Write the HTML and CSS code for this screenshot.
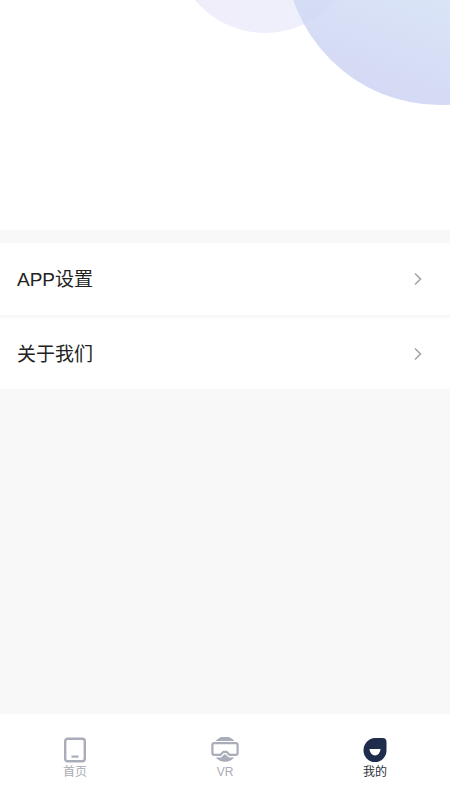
FILE: index.html
```html
<!DOCTYPE html>
<html lang="zh-CN">

<head>
    <meta charset="UTF-8">
    <meta name="viewport" content="width=device-width, initial-scale=1.0">
    <title>我的</title>
    <link rel="stylesheet" href="styles.css">
</head>

<body>
    <div class="page">
        <header class="banner">
            <div class="circle circle-small"></div>
            <div class="circle circle-large"></div>
        </header>

        <ul class="menu">
            <li class="menu-item">
                <span>APP设置</span>
                <svg class="arrow" viewBox="0 0 8 14"><path d="M1 1.5 L6.5 7 L1 12.5" /></svg>
            </li>
            <li class="menu-item">
                <span>关于我们</span>
                <svg class="arrow" viewBox="0 0 8 14"><path d="M1 1.5 L6.5 7 L1 12.5" /></svg>
            </li>
        </ul>

        <main class="blank"></main>

        <nav class="tabs">
            <div class="tab">
                <svg class="tab-icon" viewBox="0 0 24 26">
                    <rect x="2.2" y="1.7" width="19.6" height="22.6" rx="2.5" fill="none" stroke="#a9adb9" stroke-width="2.4" />
                    <rect x="8.5" y="18.5" width="7" height="2.2" fill="#a9adb9" />
                </svg>
                <span>首页</span>
            </div>
            <div class="tab">
                <svg class="tab-icon" viewBox="0 0 28 26">
                    <path d="M4.4 4 A12.5 12.5 0 0 1 23.6 4 Z" fill="#a9adb9" />
                    <path d="M4.6 20.5 A12.5 12.5 0 0 0 23.4 20.5 L18 20.5 L14 17 L10 20.5 Z" fill="#a9adb9" />
                    <path d="M1.4 8 Q1.4 6.2 3.2 6.2 L24.8 6.2 Q26.6 6.2 26.6 8 L26.6 16 Q26.6 17.8 24.8 17.8 L18.5 17.8 L15.5 14.8 L12.5 14.8 L9.5 17.8 L3.2 17.8 Q1.4 17.8 1.4 16 Z" fill="none" stroke="#a9adb9" stroke-width="2.2" />
                </svg>
                <span>VR</span>
            </div>
            <div class="tab tab-active">
                <svg class="tab-icon" viewBox="0 0 24 26">
                    <path d="M12 1 L19.5 1 Q23.5 1 23.5 5 L23.5 13.5 A11.5 11.5 0 0 1 0.5 13.5 A12 12.5 0 0 1 12 1 Z" fill="#1f2d4d" />
                    <path d="M6.5 12 L17.5 12 A5.5 6.5 0 0 1 6.5 12 Z" fill="#fff" />
                </svg>
                <span>我的</span>
            </div>
        </nav>
    </div>
</body>

</html>
```

FILE: styles.css
```css
* {
    box-sizing: border-box;
}

body {
    margin: 0;
    font-family: "Liberation Sans", "Noto Sans CJK SC", sans-serif;
    background-color: #f8f8f8;
}

.page {
    height: 800px;
    display: flex;
    flex-direction: column;
}

.banner {
    position: relative;
    height: 230px;
    overflow: hidden;
    background-color: #fff;
}

.circle {
    position: absolute;
    border-radius: 50%;
}

.circle-small {
    left: 174px;
    top: -149px;
    width: 182px;
    height: 182px;
    background: linear-gradient(90deg, #f0edfa, #eef1fd);
}

.circle-large {
    left: 285px;
    top: -205px;
    width: 310px;
    height: 310px;
    background: linear-gradient(200deg, rgba(212, 230, 246, .8) 45%, rgba(205, 210, 243, .85) 90%);
}

.menu {
    list-style: none;
    margin: 13px 0 0 0;
    padding: 0;
    background-color: #fff;
}

.menu-item {
    height: 71px;
    padding: 0 28px 0 17px;
    display: flex;
    align-items: center;
    justify-content: space-between;
    background-color: #fff;
    color: #222;
    font-size: 19px;
}

.menu-item:first-child {
    border-bottom: 3px solid #f8f8f8;
    height: 75px;
}

.menu-item span {
    margin-bottom: 3px;
}

.arrow {
    width: 8px;
    height: 14px;
    fill: none;
    stroke: #a6a6a6;
    stroke-width: 1.6;
}

.blank {
    flex: 1;
}

.tabs {
    height: 86px;
    display: flex;
    background-color: #fff;
    padding-top: 23px;
}

.tab {
    flex: 1;
    display: flex;
    flex-direction: column;
    align-items: center;
    color: #a9acb4;
    font-size: 12px;
    line-height: 16px;
}

.tab-icon {
    height: 26px;
    margin-bottom: 1px;
}

.tab-active {
    color: #2c2f38;
}
```
